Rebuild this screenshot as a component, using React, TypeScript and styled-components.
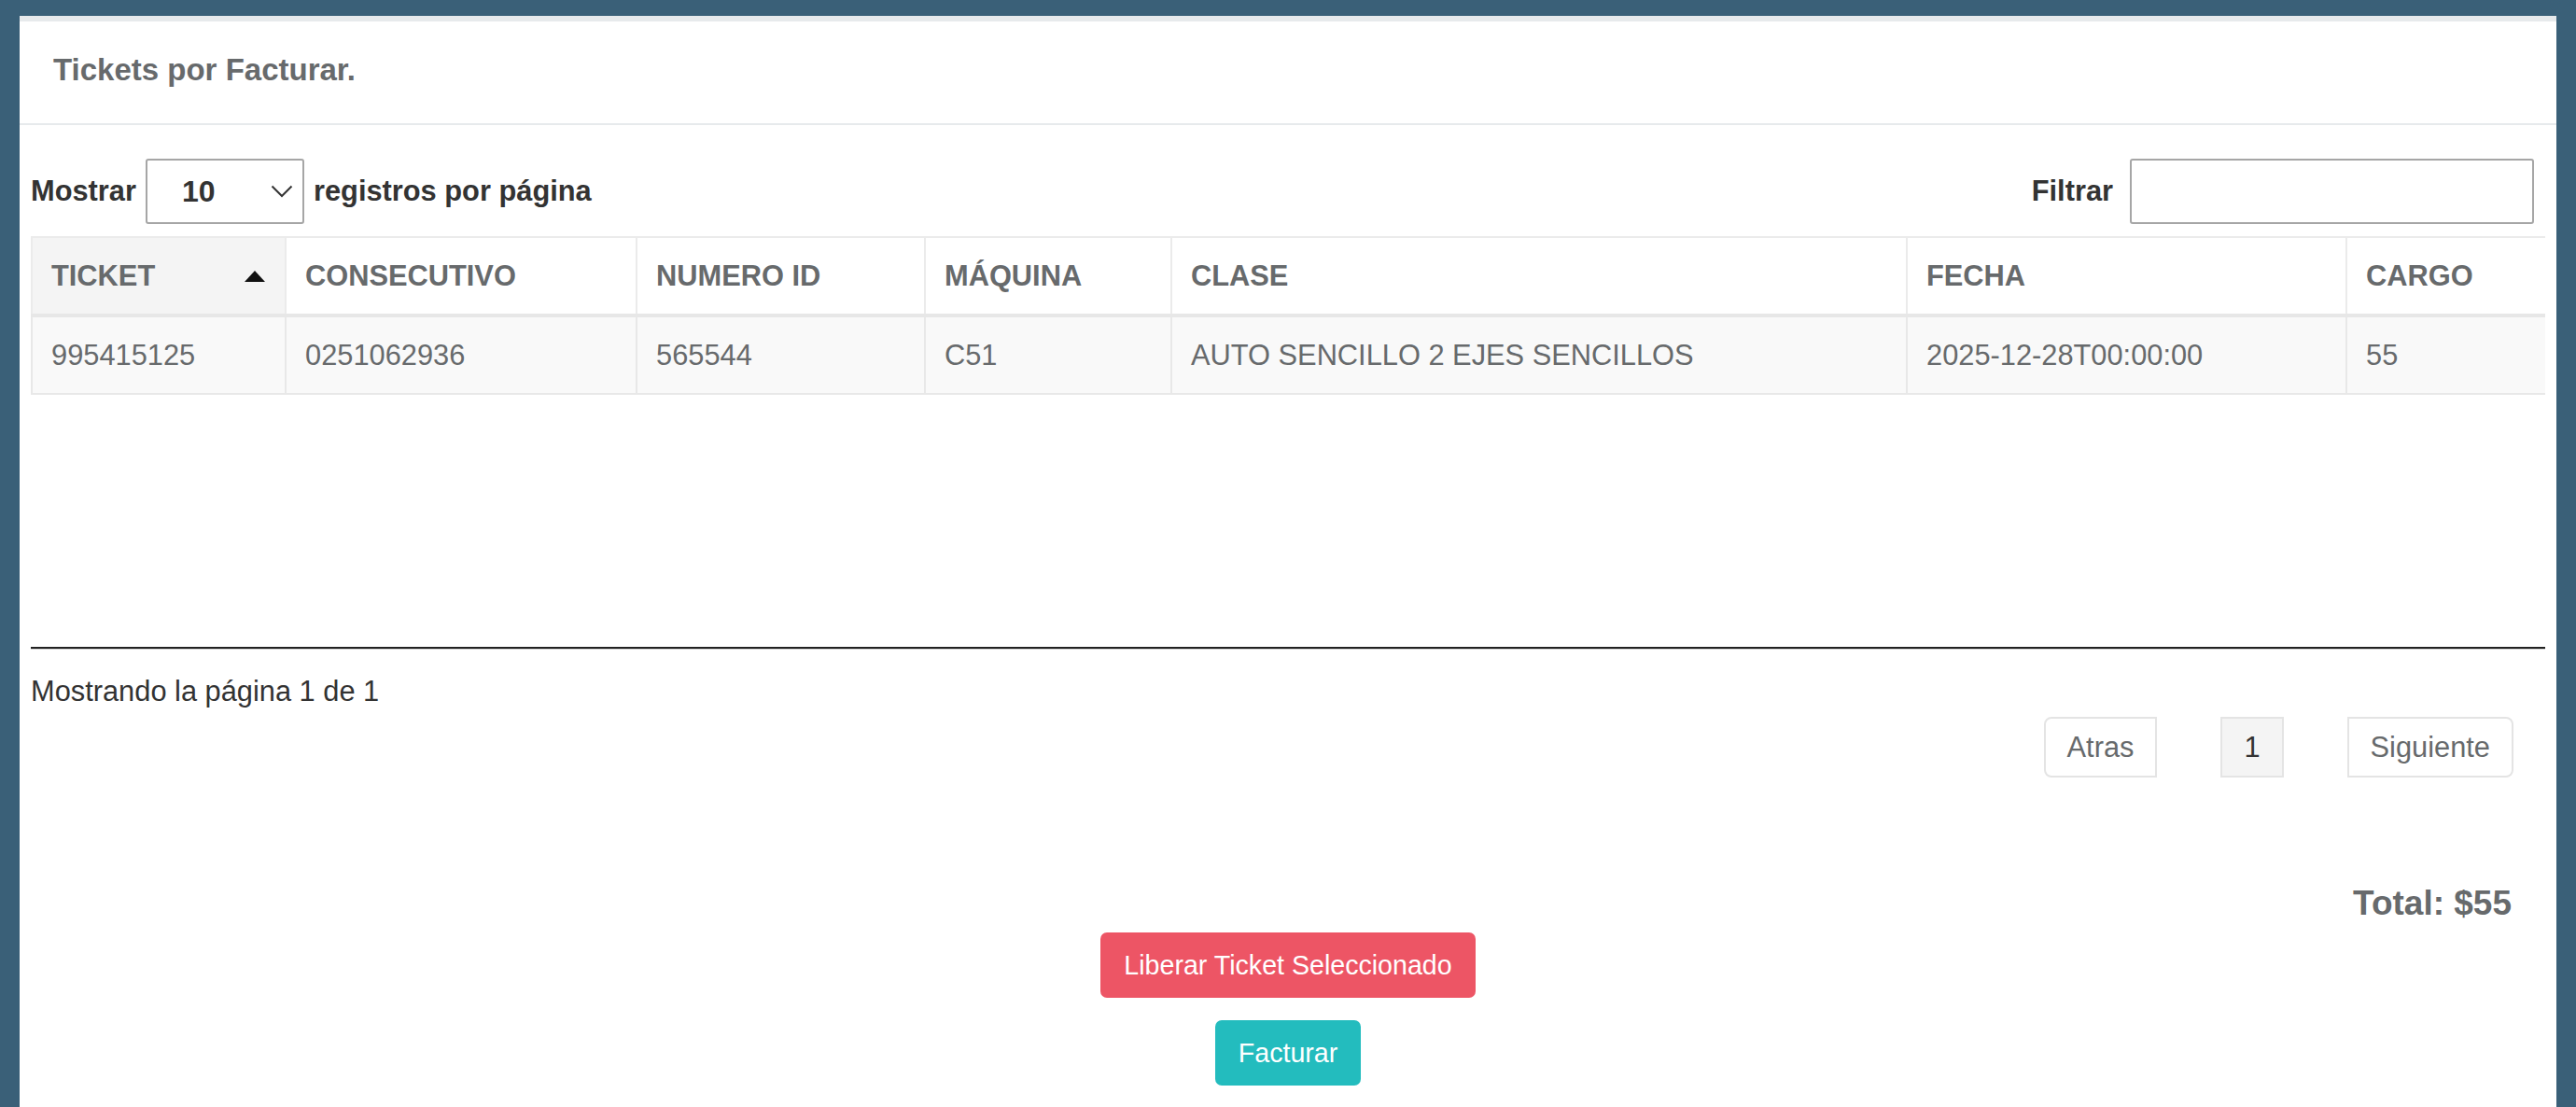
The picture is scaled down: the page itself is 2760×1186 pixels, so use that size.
import React from 'react';
import styled, { createGlobalStyle } from 'styled-components';

const GlobalStyle = createGlobalStyle`
  html, body {
    margin: 0;
    padding: 0;
    background: #3a6078;
    overflow: hidden;
  }
  body {
    font-family: "Liberation Sans", Arial, Helvetica, sans-serif;
    font-size: 30.8px;
    color: #676a6c;
  }
  * {
    box-sizing: border-box;
  }
`;

const Page = styled.div`
  padding: 17px 21px 0;
  min-height: 100vh;
`;

const Panel = styled.section`
  background: #fff;
  border-top: 6px solid #e7eaec;
  min-height: calc(100vh - 17px);
`;

const PanelHeader = styled.div`
  height: 111px;
  padding: 0 36px 6px;
  border-bottom: 2px solid #e7eaec;
  display: flex;
  align-items: center;
`;

const Title = styled.h5`
  margin: 0;
  font-size: 33px;
  font-weight: 700;
  color: #676a6c;
`;

const PanelBody = styled.div`
  padding: 36px 12px 23px;
`;

const Controls = styled.div`
  height: 70px;
  display: flex;
  align-items: center;
  justify-content: space-between;
`;

const ControlGroup = styled.label`
  display: flex;
  align-items: center;
  gap: 10px;
  font-weight: 700;
  color: #333;
`;

const FilterGroup = styled(ControlGroup)`
  gap: 18px;
  margin-right: 12px;
`;

const SelectWrap = styled.div`
  position: relative;
  width: 170px;
  height: 70px;
`;

const Select = styled.select`
  appearance: none;
  width: 100%;
  height: 100%;
  padding: 0 0 0 37px;
  border: 2px solid #a6a6a6;
  border-radius: 3px;
  background: #fff;
  font-family: inherit;
  font-size: 32px;
  font-weight: 700;
  color: #333;
  outline: none;
`;

const Chevron = styled.svg`
  position: absolute;
  right: 12px;
  top: 28px;
  pointer-events: none;
`;

const FilterInput = styled.input`
  width: 433px;
  height: 70px;
  border: 2px solid #a6a6a6;
  border-radius: 3px;
  padding: 0 14px;
  font-family: inherit;
  font-size: 30.8px;
  outline: none;
`;

const TableWrap = styled.div`
  margin-top: 13px;
  height: 440px;
  overflow: hidden;
`;

const Table = styled.table`
  width: 2720px;
  table-layout: fixed;
  border-collapse: collapse;
  border: 2px solid #e8e8e8;
`;

const HeadCell = styled.th<{ $sorted?: boolean }>`
  padding: 18px 20px;
  line-height: 45px;
  text-align: left;
  font-weight: 700;
  color: #676a6c;
  white-space: nowrap;
  background: ${({ $sorted }) => ($sorted ? '#f4f4f4' : '#fff')};
  border: 2px solid #ebebeb;
  border-bottom: 4px solid #e7e7e7;
`;

const SortLabel = styled.div`
  display: flex;
  align-items: center;
  justify-content: space-between;
`;

const SortArrow = styled.span`
  width: 0;
  height: 0;
  border-left: 11px solid transparent;
  border-right: 11px solid transparent;
  border-bottom: 12px solid #111;
  margin-right: 1px;
`;

const Cell = styled.td`
  padding: 18px 20px;
  line-height: 45px;
  background: #f9f9f9;
  color: #676a6c;
  white-space: nowrap;
  border: 2px solid #e8e8e8;
`;

const Rule = styled.hr`
  margin: 0;
  height: 0;
  border: none;
  border-top: 2px solid #222;
  border-bottom: 1px solid #d5d5d5;
`;

const PageInfo = styled.div`
  margin-top: 23px;
  line-height: 44px;
  color: #333;
`;

const Pager = styled.div`
  margin-top: 5px;
  margin-right: 34px;
  display: flex;
  justify-content: flex-end;
  gap: 68px;
`;

const PageButton = styled.button<{ $active?: boolean; $edge?: 'first' | 'last' }>`
  height: 65px;
  padding: 0 23px;
  border: 2px solid #e4e4e4;
  border-radius: ${({ $edge }) =>
    $edge === 'first' ? '8px 0 0 8px' : $edge === 'last' ? '0 8px 8px 0' : '0'};
  background: ${({ $active }) => ($active ? '#f4f4f4' : '#fff')};
  color: ${({ $active }) => ($active ? '#333' : '#676a6c')};
  font-family: inherit;
  font-size: 30.8px;
  cursor: pointer;
`;

const Total = styled.h3`
  margin: 114px 36px 0 0;
  text-align: right;
  font-size: 37px;
  line-height: 41px;
  font-weight: 700;
  color: #676a6c;
`;

const Actions = styled.div`
  margin-top: 11px;
  display: flex;
  flex-direction: column;
  align-items: center;
  gap: 24px;
`;

const ActionButton = styled.button<{ $tone: 'danger' | 'info' }>`
  height: 70px;
  padding: 0 25px;
  border: none;
  border-radius: 7px;
  background: ${({ $tone }) => ($tone === 'danger' ? '#ed5565' : '#23bcbe')};
  color: #fff;
  font-family: inherit;
  font-size: 28.6px;
  cursor: pointer;
`;

const columns = [
  { label: 'TICKET', width: 272 },
  { label: 'CONSECUTIVO', width: 376 },
  { label: 'NUMERO ID', width: 309 },
  { label: 'MÁQUINA', width: 264 },
  { label: 'CLASE', width: 788 },
  { label: 'FECHA', width: 471 },
  { label: 'CARGO', width: 240 },
];

const rows = [
  ['995415125', '0251062936', '565544', 'C51', 'AUTO SENCILLO 2 EJES SENCILLOS', '2025-12-28T00:00:00', '55'],
];

export default function App() {
  return (
    <>
      <GlobalStyle />
      <Page>
        <Panel>
          <PanelHeader>
            <Title>Tickets por Facturar.</Title>
          </PanelHeader>
          <PanelBody>
            <Controls>
              <ControlGroup>
                Mostrar
                <SelectWrap>
                  <Select defaultValue="10">
                    <option value="10">10</option>
                    <option value="25">25</option>
                    <option value="50">50</option>
                  </Select>
                  <Chevron width="24" height="14" viewBox="0 0 24 14">
                    <polyline points="1.5,1.5 12,12 22.5,1.5" fill="none" stroke="#333" strokeWidth="2" />
                  </Chevron>
                </SelectWrap>
                registros por página
              </ControlGroup>
              <FilterGroup>
                Filtrar
                <FilterInput type="search" />
              </FilterGroup>
            </Controls>

            <TableWrap>
              <Table>
                <colgroup>
                  {columns.map((c) => (
                    <col key={c.label} style={{ width: c.width }} />
                  ))}
                </colgroup>
                <thead>
                  <tr>
                    {columns.map((c, i) => (
                      <HeadCell key={c.label} $sorted={i === 0}>
                        {i === 0 ? (
                          <SortLabel>
                            {c.label}
                            <SortArrow />
                          </SortLabel>
                        ) : (
                          c.label
                        )}
                      </HeadCell>
                    ))}
                  </tr>
                </thead>
                <tbody>
                  {rows.map((r) => (
                    <tr key={r[0]}>
                      {r.map((v, i) => (
                        <Cell key={i}>{v}</Cell>
                      ))}
                    </tr>
                  ))}
                </tbody>
              </Table>
            </TableWrap>

            <Rule />
            <PageInfo>Mostrando la página 1 de 1</PageInfo>
            <Pager>
              <PageButton $edge="first">Atras</PageButton>
              <PageButton $active>1</PageButton>
              <PageButton $edge="last">Siguiente</PageButton>
            </Pager>

            <Total>Total: $55</Total>
            <Actions>
              <ActionButton $tone="danger">Liberar Ticket Seleccionado</ActionButton>
              <ActionButton $tone="info">Facturar</ActionButton>
            </Actions>
          </PanelBody>
        </Panel>
      </Page>
    </>
  );
}
